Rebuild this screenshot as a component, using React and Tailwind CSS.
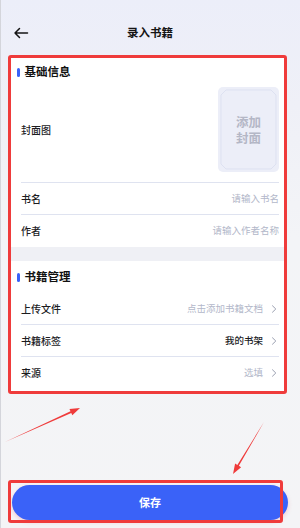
import React from "react";

function Chevron() {
  return (
    <svg width="10" height="10" viewBox="0 0 10 10" className="ml-[3px] shrink-0">
      <path d="M3.5 1.8 L6.8 5 L3.5 8.2" fill="none" stroke="#9a9fb0" strokeWidth="1" strokeLinecap="round" strokeLinejoin="round" />
    </svg>
  );
}

function SectionTitle({ children }) {
  return (
    <div className="flex items-center h-[16px] pl-[3px]">
      <div className="w-[2.5px] h-[9px] rounded-full bg-[#3a62f8]" />
      <div className="ml-[5px] text-[11.5px] font-bold text-[#111] leading-none">{children}</div>
    </div>
  );
}

function Row({ label, value, valueClass = "text-[#b2b7c9]", chevron, divider }) {
  return (
    <div className={"flex items-center h-[32px] " + (divider ? "border-b border-[#dfe3f0]" : "")}>
      <div className="text-[10px] font-medium text-[#1c1c1f] leading-none">{label}</div>
      <div className="flex-1" />
      <div className={"text-[9.5px] leading-none " + valueClass}>{value}</div>
      {chevron ? <div className="w-[3px]" /> : null}
      {chevron ? <Chevron /> : null}
    </div>
  );
}

export default function App() {
  return (
    <div className="relative w-[300px] h-[528px] overflow-hidden flex flex-col bg-[linear-gradient(180deg,#eceef9_0%,#eff0f7_20%,#f3f4f7_45%,#f4f4f6_100%)] shadow-[inset_1px_0_0_#d4d5db] font-['Noto_Sans_CJK_SC','Noto_Sans',sans-serif]">
      {/* header */}
      <div className="pt-[22px] h-[55px] shrink-0">
        <div className="relative flex items-center justify-center h-[22px]">
          <svg width="16" height="12" viewBox="0 0 16 12" className="absolute left-[13px] top-[5px]">
            <path d="M14.5 6 H2 M6.5 1.5 L2 6 L6.5 10.5" fill="none" stroke="#141414" strokeWidth="1.5" strokeLinecap="round" strokeLinejoin="round" />
          </svg>
          <div className="text-[11.5px] font-bold text-[#151515] leading-none">录入书籍</div>
        </div>
      </div>

      {/* red annotated box */}
      <div className="mx-[8px] w-[279px] border-[3px] border-[#ef3b3b] rounded-[3px] bg-white overflow-hidden">
        {/* card 1 */}
        <div className="bg-white pl-[10px] pr-[5px]">
          <div className="pt-[6px] -ml-[10px] pl-[3px]">
            <SectionTitle>基础信息</SectionTitle>
          </div>
          <div className="flex items-center pt-[7px] pb-[10px] border-b border-[#dfe3f0]">
            <div className="text-[10px] font-medium text-[#1c1c1f] leading-none">封面图</div>
            <div className="flex-1" />
            <div className="relative w-[61px] h-[85px] rounded-[5px] bg-[#eceef8] flex flex-col items-center justify-center">
              <svg width="61" height="85" viewBox="0 0 61 85" className="absolute inset-0">
                <polygon points="8,3 53,3 58,8 58,77 53,82 8,82 3,77 3,8" fill="none" stroke="#dde1f1" strokeWidth="1" />
              </svg>
              <div className="relative h-[16px] text-[12.5px] font-bold text-[#b4b7c6] leading-[16px]">添加</div>
              <div className="relative h-[16px] text-[12.5px] font-bold text-[#b4b7c6] leading-[16px]">封面</div>
            </div>
          </div>
          <Row label="书名" value="请输入书名" divider />
          <Row label="作者" value="请输入作者名称" />
        </div>
        {/* gap */}
        <div className="h-[14px] bg-[#eff0f5]" />
        {/* card 2 */}
        <div className="bg-white pl-[10px] pr-[5px] pb-[2px]">
          <div className="pt-[8px] pb-[8px] -ml-[10px] pl-[3px]">
            <SectionTitle>书籍管理</SectionTitle>
          </div>
          <Row label="上传文件" value="点击添加书籍文档" chevron divider />
          <Row label="书籍标签" value="我的书架" valueClass="text-[#1c1c1f] font-medium" chevron divider />
          <Row label="来源" value="选填" chevron />
        </div>
      </div>

      <div className="flex-1" />

      {/* save button */}
      <div className="mx-[12px] mb-[8px] w-[276px] h-[35px] rounded-full bg-[#3a62f8] flex items-center justify-center shadow-[0_2px_4px_rgba(240,80,100,0.25)]">
        <div className="text-[11px] font-bold text-white leading-none">保存</div>
      </div>

      {/* annotation: red box around button */}
      <div className="absolute left-[8px] top-[480px] w-[275px] h-[43px] border-[3px] border-[#ef3b3b] rounded-[3px] pointer-events-none" />

      {/* annotation arrows */}
      <svg width="300" height="528" viewBox="0 0 300 528" className="absolute inset-0 pointer-events-none">
        <polygon points="5,442 71.26,412.95 72.34,415.32 80,408 69.44,408.94 70.52,411.31" fill="#ef3b3b" />
        <polygon points="264,422 238.89,465.87 241.13,467.2 233,474 235.11,463.62 237.35,464.95" fill="#ef3b3b" />
      </svg>
    </div>
  );
}
